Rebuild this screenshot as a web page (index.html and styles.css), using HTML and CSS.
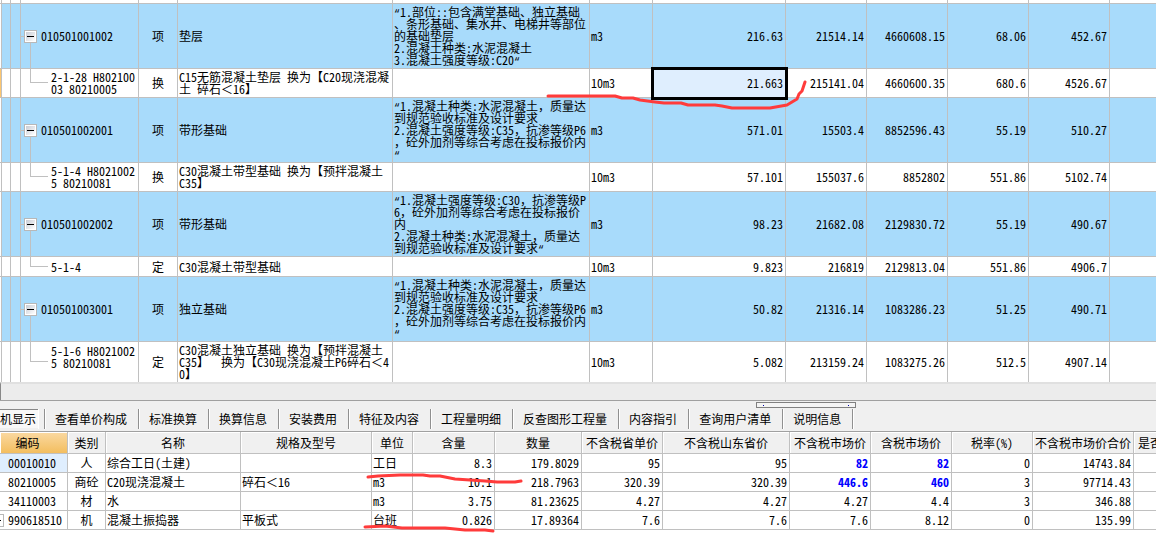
FILE: index.html
```html
<!DOCTYPE html>
<html lang="zh-CN">
<head>
<meta charset="utf-8">
<title>工程量清单</title>
<link rel="stylesheet" href="styles.css">
</head>
<body>
<main class="workspace">
<table class="grid bill">
<colgroup>
<col class="w-edge"><col class="w-indent-a"><col class="w-indent-b"><col class="w-code"><col class="w-kind"><col class="w-name"><col class="w-feature"><col class="w-unit"><col class="w-qty"><col class="w-num"><col class="w-num"><col class="w-num"><col class="w-num"><col>
</colgroup>
<tbody>
<tr class="sliver"><td></td><td></td><td></td><td></td><td></td><td></td><td></td><td></td><td></td><td></td><td></td><td></td><td></td><td></td></tr>
<tr class="item"><td></td><td></td><td></td><td class="code parent"><button class="toggle" aria-label="折叠"></button>010501001002</td><td class="kind">项</td><td>垫层</td><td class="feature"><span class="quote">“</span>1.部位::包含满堂基础、独立基础
、条形基础、集水井、电梯井等部位
的基础垫层
2.混凝土种类:水泥混凝土
3.混凝土强度等级:C20<span class="quote">“</span></td><td>m3</td><td class="num">216.63</td><td class="num">21514.14</td><td class="num">4660608.15</td><td class="num">68.06</td><td class="num">452.67</td><td></td></tr>
<tr class="sub"><td class="marker"></td><td></td><td></td><td class="code child">2-1-28 H802100
03 80210005</td><td class="kind">换</td><td>C15无筋混凝土垫层 换为【C20现浇混凝
土 碎石＜16】</td><td></td><td>10m3</td><td class="num selected">21.663</td><td class="num">215141.04</td><td class="num">4660600.35</td><td class="num">680.6</td><td class="num">4526.67</td><td></td></tr>
<tr class="item"><td></td><td></td><td></td><td class="code parent"><button class="toggle" aria-label="折叠"></button>010501002001</td><td class="kind">项</td><td>带形基础</td><td class="feature"><span class="quote">“</span>1.混凝土种类:水泥混凝土，质量达
到规范验收标准及设计要求
2.混凝土强度等级:C35，抗渗等级P6
，砼外加剂等综合考虑在投标报价内
<span class="quote">“</span></td><td>m3</td><td class="num">571.01</td><td class="num">15503.4</td><td class="num">8852596.43</td><td class="num">55.19</td><td class="num">510.27</td><td></td></tr>
<tr class="sub"><td></td><td></td><td></td><td class="code child">5-1-4 H8021002
5 80210081</td><td class="kind">换</td><td>C30混凝土带型基础 换为【预拌混凝土
C35】</td><td></td><td>10m3</td><td class="num">57.101</td><td class="num">155037.6</td><td class="num">8852802</td><td class="num">551.86</td><td class="num">5102.74</td><td></td></tr>
<tr class="item"><td></td><td></td><td></td><td class="code parent"><button class="toggle" aria-label="折叠"></button>010501002002</td><td class="kind">项</td><td>带形基础</td><td class="feature"><span class="quote">“</span>1.混凝土强度等级:C30，抗渗等级P
6，砼外加剂等综合考虑在投标报价
内
2.混凝土种类:水泥混凝土，质量达
到规范验收标准及设计要求<span class="quote">“</span></td><td>m3</td><td class="num">98.23</td><td class="num">21682.08</td><td class="num">2129830.72</td><td class="num">55.19</td><td class="num">490.67</td><td></td></tr>
<tr class="sub short"><td></td><td></td><td></td><td class="code child">5-1-4</td><td class="kind">定</td><td>C30混凝土带型基础</td><td></td><td>10m3</td><td class="num">9.823</td><td class="num">216819</td><td class="num">2129813.04</td><td class="num">551.86</td><td class="num">4906.7</td><td></td></tr>
<tr class="item"><td></td><td></td><td></td><td class="code parent"><button class="toggle" aria-label="折叠"></button>010501003001</td><td class="kind">项</td><td>独立基础</td><td class="feature"><span class="quote">“</span>1.混凝土种类:水泥混凝土，质量达
到规范验收标准及设计要求
2.混凝土强度等级:C35，抗渗等级P6
，砼外加剂等综合考虑在投标报价内
<span class="quote">“</span></td><td>m3</td><td class="num">50.82</td><td class="num">21316.14</td><td class="num">1083286.23</td><td class="num">51.25</td><td class="num">490.71</td><td></td></tr>
<tr class="sub last"><td></td><td></td><td></td><td class="code child">5-1-6 H8021002
5 80210081</td><td class="kind">定</td><td>C30混凝土独立基础 换为【预拌混凝土
C35】  换为【C30现浇混凝土P6碎石＜4
0】</td><td></td><td>10m3</td><td class="num">5.082</td><td class="num">213159.24</td><td class="num">1083275.26</td><td class="num">512.5</td><td class="num">4907.14</td><td></td></tr>
</tbody>
</table>
<div class="scrollbar"></div>
<section class="detail">
<button class="grip" aria-label="折叠面板"></button>
<nav class="tabs">
<button class="tab active">机显示</button><button class="tab">查看单价构成</button><button class="tab">标准换算</button><button class="tab">换算信息</button><button class="tab">安装费用</button><button class="tab">特征及内容</button><button class="tab">工程量明细</button><button class="tab">反查图形工程量</button><button class="tab">内容指引</button><button class="tab">查询用户清单</button><button class="tab">说明信息</button>
</nav>
<table class="grid resources">
<colgroup>
<col class="r-code"><col class="r-type"><col class="r-name"><col class="r-spec"><col class="r-unit"><col class="r-content"><col class="r-qty"><col class="w-num"><col class="r-shandong"><col class="w-num"><col class="w-num"><col class="w-num"><col class="r-total"><col>
</colgroup>
<thead>
<tr><th class="current">编码</th><th>类别</th><th>名称</th><th>规格及型号</th><th>单位</th><th>含量</th><th>数量</th><th>不含税省单价</th><th>不含税山东省价</th><th>不含税市场价</th><th>含税市场价</th><th>税率(%)</th><th>不含税市场价合价</th><th class="cut">是否</th></tr>
</thead>
<tbody>
<tr><td class="rcode focus">00010010</td><td class="kind">人</td><td>综合工日(土建)</td><td></td><td>工日</td><td class="num">8.3</td><td class="num">179.8029</td><td class="num">95</td><td class="num">95</td><td class="num price">82</td><td class="num price">82</td><td class="num">0</td><td class="num">14743.84</td><td></td></tr>
<tr><td class="rcode">80210005</td><td class="kind">商砼</td><td>C20现浇混凝土</td><td>碎石＜16</td><td>m3</td><td class="num">10.1</td><td class="num">218.7963</td><td class="num">320.39</td><td class="num">320.39</td><td class="num price">446.6</td><td class="num price">460</td><td class="num">3</td><td class="num">97714.43</td><td></td></tr>
<tr><td class="rcode">34110003</td><td class="kind">材</td><td>水</td><td></td><td>m3</td><td class="num">3.75</td><td class="num">81.23625</td><td class="num">4.27</td><td class="num">4.27</td><td class="num">4.27</td><td class="num">4.4</td><td class="num">3</td><td class="num">346.88</td><td></td></tr>
<tr><td class="rcode expandable">990618510</td><td class="kind">机</td><td>混凝土振捣器</td><td>平板式</td><td>台班</td><td class="num">0.826</td><td class="num">17.89364</td><td class="num">7.6</td><td class="num">7.6</td><td class="num">7.6</td><td class="num">8.12</td><td class="num">0</td><td class="num">135.99</td><td></td></tr>
</tbody>
</table>
</section>
<svg class="ink" width="820" height="537" viewBox="0 0 820 537" aria-hidden="true">
<path d="M548 96H615L622 98H633L640 100L655 102L664 103H681L688 105H715L722 106L732 108H770L787 105L797 99L799 94L802 91L805 82"/>
<path d="M368 477L378 476L400 475H423L430 476H440L455 479L470 480L485 481L497 482H515L521 481"/>
<path d="M365 527L385 526L402 528H445L465 530H485L493 531"/>
</svg>
</main>
</body>
</html>
```
FILE: styles.css
```css
* {
  box-sizing: border-box;
}

body {
  margin: 0;
  background: #fff;
  color: #000;
  font-family: "Noto Sans Mono CJK SC", "Noto Sans CJK SC", sans-serif;
  font-size: 12px;
  line-height: 12px;
}

.workspace {
  position: relative;
  min-height: 100vh;
  overflow: hidden;
}

.grid {
  width: 100%;
  table-layout: fixed;
  border-collapse: separate;
  border-spacing: 0;
}

.grid td,
.grid th {
  padding: 0 2px 0 1px;
  border-right: 1px solid #c0c0c0;
  border-bottom: 1px solid #c0c0c0;
  font-weight: 400;
  white-space: pre;
  vertical-align: middle;
}

.grid td:last-child,
.grid th:last-child {
  border-right: 0;
}

.grid .num {
  text-align: right;
}

.grid .kind {
  padding: 0;
  text-align: center;
}

.w-edge { width: 2px; }
.w-indent-a { width: 9px; }
.w-indent-b { width: 10px; }
.w-code { width: 118px; }
.w-kind { width: 39px; }
.w-name { width: 215px; }
.w-feature { width: 197px; }
.w-unit { width: 63px; }
.w-qty { width: 133px; }
.w-num { width: 81px; }

.bill td:nth-child(-n+3) {
  padding: 0;
}

.bill .sliver td { height: 4px; }
.bill .item td { height: 65px; background: #a8dbfb; }
.bill .item td:first-child { background: #fff; }
.bill .sub td { height: 29px; }
.bill .short td { height: 20px; }
.bill .last td { height: 40px; border-bottom: 0; }
.bill .last .code { padding-bottom: 10px; }

.bill .sub .marker {
  background: #fcc66f;
}

.quote {
  font-family: "Liberation Mono", monospace;
  font-size: 10px;
  line-height: 0;
}

.bill .code {
  position: relative;
  padding-right: 0;
}

.bill .parent { padding-left: 20px; }
.bill .child { padding-left: 30px; }

.parent::before,
.parent::after,
.child::before {
  content: "";
  position: absolute;
}

.parent::before {
  top: 50%;
  bottom: -1px;
  left: 9px;
  border-left: 1px solid #c0c0c0;
}

.parent::after {
  top: 50%;
  left: 0;
  width: 4px;
  border-top: 1px solid #c0c0c0;
}

.child::before {
  top: 0;
  bottom: 50%;
  left: 9px;
  width: 17px;
  border-left: 1px solid #c0c0c0;
  border-bottom: 1px solid #c0c0c0;
}

.toggle {
  position: absolute;
  z-index: 1;
  top: calc(50% - 6px);
  left: 3px;
  width: 13px;
  height: 13px;
  padding: 0;
  border: 1px solid #b8b8b8;
  background:
    linear-gradient(#000, #000) center / 7px 1px no-repeat,
    linear-gradient(135deg, #c8ccd4, #fff) center / 9px 9px no-repeat,
    #fff;
}

.bill .selected {
  background: #dfeefe;
  outline: 3px solid #000;
  outline-offset: -1px;
}

.scrollbar {
  height: 18px;
  border-top: 2px solid #e0e0e0;
  border-left: 1px solid #888;
  background: #ececec;
}

.detail {
  position: relative;
  border-top: 1px solid #a0a0a0;
}

.grip {
  position: absolute;
  top: 1px;
  left: 756px;
  width: 100px;
  height: 6px;
  padding: 0;
  border: 1px solid #808080;
  background:
    linear-gradient(#00a, #00a) 6px 2px / 1px 1px no-repeat,
    linear-gradient(#00a, #00a) 91px 2px / 1px 1px no-repeat,
    #f4f4f4;
}

.tabs {
  display: flex;
  padding: 8px 0 2px;
  border-bottom: 1px solid #a0a0a0;
  background: #f0f0f0;
}

.tab {
  flex: none;
  height: 20px;
  padding: 0 11px 0 10px;
  border: 0;
  border-right: 1px solid #909090;
  background: none;
  box-shadow: 1px 0 #fff;
  color: #000;
  font: inherit;
  white-space: nowrap;
}

.tab.active {
  width: 45px;
  padding: 0 9px 0 0;
  background:
    linear-gradient(#888, #888) 0 0 / 38px 1px no-repeat,
    linear-gradient(#fff, #fff) 38px 0 / 1px 20px no-repeat,
    linear-gradient(#f8f8f8, #f8f8f8) 0 0 / 38px 19px no-repeat;
}

.r-code { width: 68px; }
.r-type { width: 38px; }
.r-name { width: 135px; }
.r-spec { width: 131px; }
.r-unit { width: 41px; }
.r-content { width: 82px; }
.r-qty { width: 87px; }
.r-shandong { width: 127px; }
.r-total { width: 101px; }

.resources th {
  height: 22px;
  padding: 0;
  background: #f0f0f0;
  box-shadow: inset 1px 1px #fff;
  text-align: center;
}

.resources td { height: 19px; }

.resources .current {
  padding-right: 12px;
  background: linear-gradient(#fad9a2, #f3be5f);
}

.resources .cut {
  padding-left: 4px;
  overflow: hidden;
  text-align: left;
}

.resources .rcode { padding-left: 8px; }
.resources .focus { background: #dfeefe; }

.resources .expandable {
  background:
    linear-gradient(#000, #000) 0 9px / 1px 1px no-repeat,
    linear-gradient(#b8b8b8, #b8b8b8) 3px 3px / 1px 13px no-repeat,
    linear-gradient(#b8b8b8, #b8b8b8) 0 3px / 3px 1px no-repeat,
    linear-gradient(#b8b8b8, #b8b8b8) 0 15px / 3px 1px no-repeat;
}

.grid .price {
  color: #00f;
  font-weight: 700;
}

.ink {
  position: absolute;
  top: 0;
  left: 0;
  fill: none;
  stroke: #ff3b3b;
  stroke-width: 3;
  stroke-linecap: round;
  stroke-linejoin: round;
  pointer-events: none;
}
```
